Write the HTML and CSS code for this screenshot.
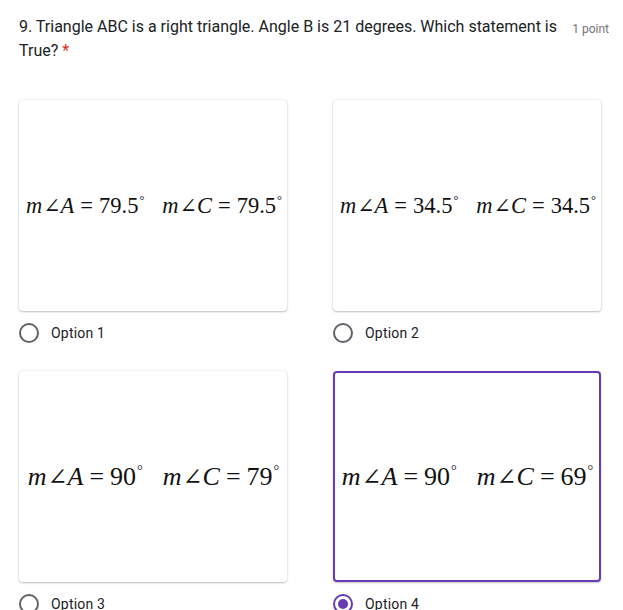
FILE: index.html
```html
<!DOCTYPE html>
<html>
<head>
<meta charset="utf-8">
<link rel="stylesheet" href="styles.css">
</head>
<body>
<div class="question">
  <div class="header">
    <div class="title">9. Triangle ABC is a right triangle. Angle B is 21 degrees. Which statement is True? <span class="req">*</span></div>
    <div class="points">1 point</div>
  </div>
  <div class="grid">
    <div class="option">
      <div class="card"><div class="math"><span><i>m</i><span class="ang">∠</span><i>A</i><span class="eq">=</span>79.5<sup>°</sup></span><span><i>m</i><span class="ang">∠</span><i>C</i><span class="eq">=</span>79.5<sup>°</sup></span></div></div>
      <div class="choice"><span class="radio"></span><span class="label">Option 1</span></div>
    </div>
    <div class="option">
      <div class="card"><div class="math"><span><i>m</i><span class="ang">∠</span><i>A</i><span class="eq">=</span>34.5<sup>°</sup></span><span><i>m</i><span class="ang">∠</span><i>C</i><span class="eq">=</span>34.5<sup>°</sup></span></div></div>
      <div class="choice"><span class="radio"></span><span class="label">Option 2</span></div>
    </div>
    <div class="option">
      <div class="card"><div class="math big"><span><i>m</i><span class="ang">∠</span><i>A</i><span class="eq">=</span>90<sup>°</sup></span><span><i>m</i><span class="ang">∠</span><i>C</i><span class="eq">=</span>79<sup>°</sup></span></div></div>
      <div class="choice"><span class="radio"></span><span class="label">Option 3</span></div>
    </div>
    <div class="option">
      <div class="card selected"><div class="math big"><span><i>m</i><span class="ang">∠</span><i>A</i><span class="eq">=</span>90<sup>°</sup></span><span><i>m</i><span class="ang">∠</span><i>C</i><span class="eq">=</span>69<sup>°</sup></span></div></div>
      <div class="choice"><span class="radio checked"></span><span class="label">Option 4</span></div>
    </div>
  </div>
</div>
</body>
</html>
```

FILE: styles.css
```css
html, body {
  margin: 0;
  padding: 0;
  background: #ffffff;
}
.question {
  padding: 15px 14px 0 19px;
  font-family: Roboto, "Liberation Sans", sans-serif;
  color: #202124;
}
.header {
  display: flex;
  align-items: flex-start;
}
.title {
  flex: 1;
  font-size: 16px;
  line-height: 24px;
  letter-spacing: 0;
}
.req {
  color: #d93025;
}
.points {
  font-size: 12px;
  line-height: 16px;
  color: #70757a;
  margin-top: 6px;
  margin-left: 12px;
  white-space: nowrap;
}
.grid {
  display: grid;
  grid-template-columns: 268px 268px;
  column-gap: 46px;
  row-gap: 28px;
  margin-top: 37px;
}
.card {
  box-sizing: border-box;
  height: 211px;
  border-radius: 4px;
  background: #fff;
  box-shadow: 0 1px 2px rgba(60, 64, 67, 0.3), 0 0 2px rgba(60, 64, 67, 0.15);
  display: flex;
  align-items: center;
  justify-content: center;
}
.card.selected {
  border: 2px solid #673ab7;
  box-shadow: 0 1px 2px rgba(60, 64, 67, 0.3);
}
.math {
  font-family: "Liberation Serif", "Times New Roman", serif;
  font-size: 22.5px;
  display: flex;
  gap: 18px;
  color: #111;
  white-space: nowrap;
  margin-left: 2px;
}
.math.big {
  font-size: 26px;
  gap: 20px;
  margin-left: 1px;
}
.math i {
  font-style: italic;
}
.ang {
  font-family: "DejaVu Serif", serif;
  font-style: italic;
  font-size: 0.92em;
  margin: 0 0 0 1px;
}
.eq {
  margin: 0 6px;
}
.math sup {
  font-size: 0.55em;
  vertical-align: 0.7em;
  line-height: 0;
  margin-left: 1px;
}
.choice {
  display: flex;
  align-items: center;
  margin-top: 12px;
  height: 20px;
}
.radio {
  box-sizing: border-box;
  width: 20px;
  height: 20px;
  border: 2px solid #5f6368;
  border-radius: 50%;
  position: relative;
}
.radio.checked {
  border-color: #673ab7;
}
.radio.checked::after {
  content: "";
  position: absolute;
  left: 3px;
  top: 3px;
  width: 10px;
  height: 10px;
  border-radius: 50%;
  background: #673ab7;
}
.label {
  margin-left: 12px;
  font-size: 14px;
  letter-spacing: 0.2px;
}
```
